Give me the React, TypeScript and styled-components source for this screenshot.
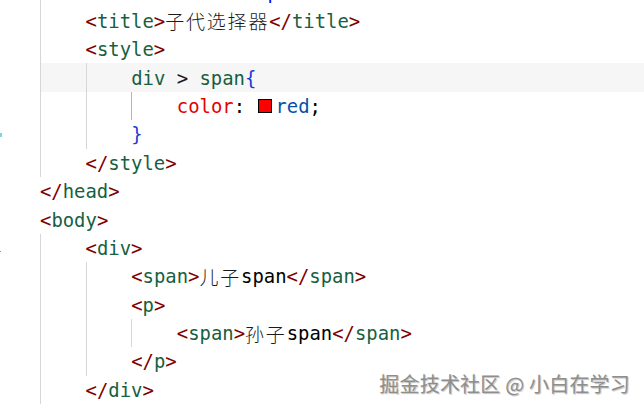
import React from "react";
import styled, { createGlobalStyle } from "styled-components";

const Global = createGlobalStyle`
  html, body { margin: 0; padding: 0; background: #ffffff; }
  body { width: 644px; height: 408px; overflow: hidden; }
`;

const Editor = styled.div`
  position: relative;
  width: 644px;
  height: 408px;
  overflow: hidden;
  background: #ffffff;
`;

const Lines = styled.div`
  display: flex;
  flex-direction: column;
  margin-top: -21.8px;
`;

const Line = styled.div`
  display: flex;
  height: 28.4px;
`;

const Gutter = styled.div<{ $mark?: "cyan" | "gray" }>`
  flex: none;
  width: 40px;
  position: relative;
  &::before {
    content: "";
    display: ${(p) => (p.$mark ? "block" : "none")};
    position: absolute;
    left: 0;
    top: ${(p) => (p.$mark === "gray" ? "17px" : "13px")};
    width: ${(p) => (p.$mark === "gray" ? "1px" : "2px")};
    height: ${(p) => (p.$mark === "gray" ? "1px" : "4px")};
    background: ${(p) => (p.$mark === "cyan" ? "#7fd6d6" : "#999")};
  }
`;

const Code = styled.div<{ $active?: boolean }>`
  flex: 1;
  display: flex;
  align-items: center;
  white-space: pre;
  font-family: "DejaVu Sans Mono", "Liberation Mono", monospace;
  font-size: 18.9px;
  color: #000000;
  background: ${(p) => (p.$active ? "#f6f6f6" : "transparent")};
`;

const Indent = styled.span<{ $active?: boolean }>`
  flex: none;
  align-self: stretch;
  width: 45.6px;
  box-sizing: border-box;
  border-left: 1px solid ${(p) => (p.$active ? "#b4b4b4" : "#d6d6d6")};
`;

const colors: Record<string, string> = {
  b: "#800000",
  t: "#16603f",
  x: "#000000",
  p: "#e50000",
  v: "#0451a5",
  br: "#1f36d8",
  s: "#16603f",
  o: "#1a1a1a",
  av: "#0000ff",
};

const Tok = styled.span<{ $k: string }>`
  color: ${(p) => colors[p.$k]};
`;

const Cjk = styled.span`
  font-family: "Noto Sans CJK SC", sans-serif;
  font-size: 19px;
  letter-spacing: 1.8px;
  font-weight: 300;
  color: #1a1a1a;
`;

const Swatch = styled.span`
  display: inline-block;
  width: 12px;
  height: 12px;
  margin: 0 3px 0 2px;
  background: #ff0000;
  border: 1.5px solid #000000;
`;

const Watermark = styled.div`
  position: absolute;
  right: 14px;
  bottom: 12px;
  font-family: "Noto Sans CJK SC", sans-serif;
  font-size: 20px;
  line-height: 24px;
  color: #8e8e8e;
  text-shadow: 1px 1px 1px rgba(0, 0, 0, 0.25), -1px -1px 0 rgba(255, 255, 255, 0.8);
  letter-spacing: 0.2px;
`;

type Part = [string, string];

type LineDef = {
  level: number;
  parts: Part[];
  active?: boolean;
  activeGuide?: number;
  mark?: "cyan" | "gray";
};

const tag = (name: string, close = false): Part[] => [
  ["b", close ? "</" : "<"],
  ["t", name],
  ["b", ">"],
];

const lines: LineDef[] = [
  {
    level: 1,
    parts: [
      ["x", "           "],
      ["av", '"viewport"'],
    ],
  },
  { level: 1, parts: [...tag("title"), ["cjk", "子代选择器"], ...tag("title", true)] },
  { level: 1, parts: tag("style") },
  {
    level: 2,
    active: true,
    parts: [
      ["s", "div"],
      ["o", " > "],
      ["s", "span"],
      ["br", "{"],
    ],
  },
  {
    level: 3,
    activeGuide: 2,
    parts: [
      ["p", "color"],
      ["x", ": "],
      ["swatch", ""],
      ["v", "red"],
      ["x", ";"],
    ],
  },
  { level: 2, parts: [["br", "}"]], mark: "cyan" },
  { level: 1, parts: tag("style", true) },
  { level: 0, parts: tag("head", true) },
  { level: 0, parts: tag("body") },
  { level: 1, parts: tag("div"), mark: "gray" },
  { level: 2, parts: [...tag("span"), ["cjk", "儿子"], ["x", "span"], ...tag("span", true)] },
  { level: 2, parts: tag("p") },
  { level: 3, parts: [...tag("span"), ["cjk", "孙子"], ["x", "span"], ...tag("span", true)] },
  { level: 2, parts: tag("p", true) },
  { level: 1, parts: tag("div", true) },
];

function renderPart(part: Part, i: number) {
  const [k, text] = part;
  if (k === "cjk") return <Cjk key={i}>{text}</Cjk>;
  if (k === "swatch") return <Swatch key={i} />;
  return (
    <Tok key={i} $k={k}>
      {text}
    </Tok>
  );
}

export default function App() {
  return (
    <>
      <Global />
      <Editor>
        <Lines>
          {lines.map((ln, i) => (
            <Line key={i}>
              <Gutter $mark={ln.mark} />
              <Code $active={ln.active}>
                {Array.from({ length: ln.level }).map((_, g) => (
                  <Indent key={g} $active={ln.activeGuide === g} />
                ))}
                {ln.parts.map(renderPart)}
              </Code>
            </Line>
          ))}
        </Lines>
        <Watermark>掘金技术社区 @ 小白在学习</Watermark>
      </Editor>
    </>
  );
}
